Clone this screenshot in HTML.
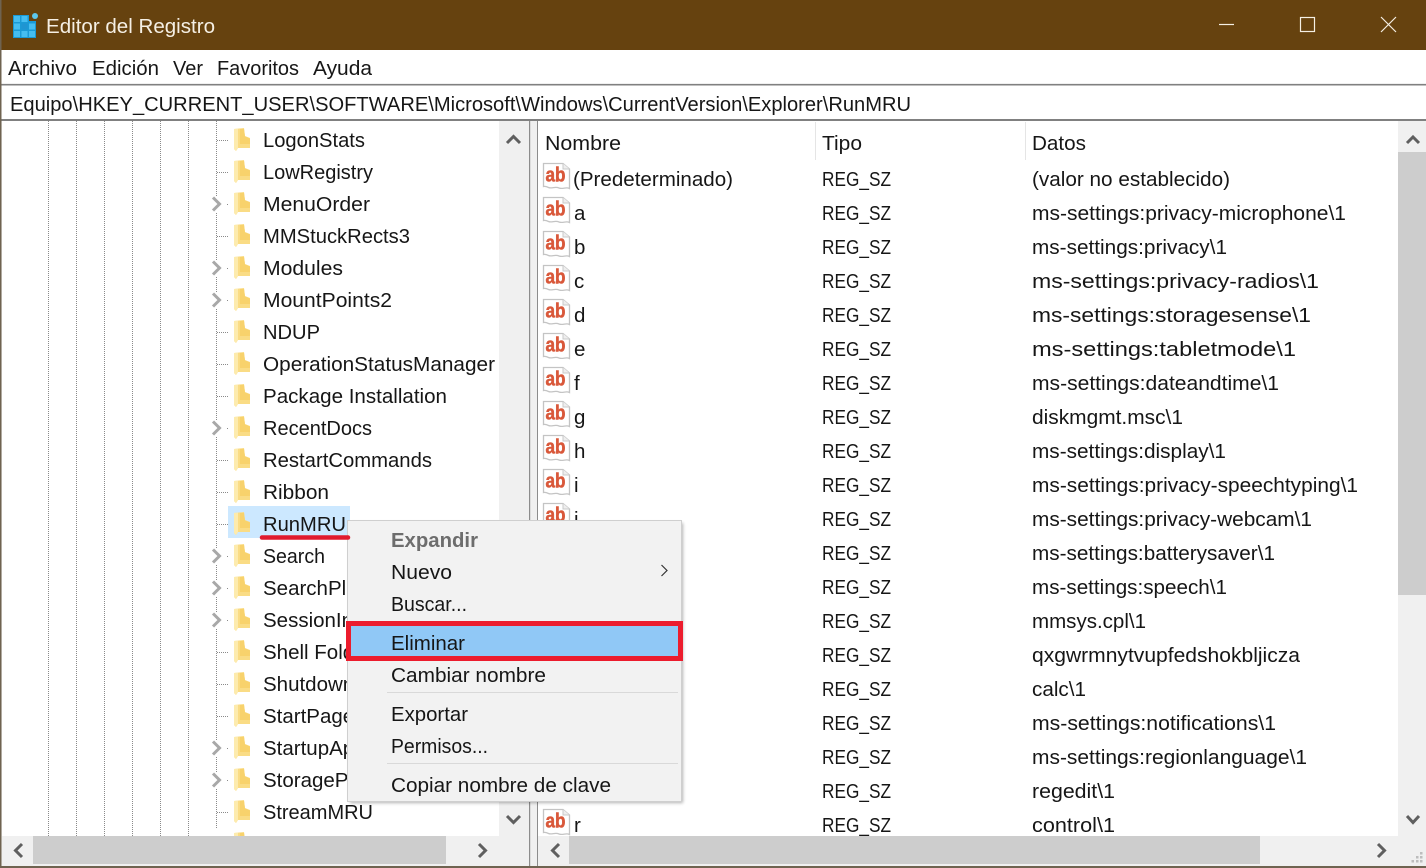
<!DOCTYPE html>
<html lang="es">
<head>
<meta charset="utf-8">
<title>Editor del Registro</title>
<style>
html,body{margin:0;padding:0;width:1426px;height:868px;overflow:hidden;background:#fff}
svg{display:block}
text{font-family:"Liberation Sans",sans-serif;font-size:20.5px;fill:#161616}
.dot{stroke:#8a8a8a;stroke-width:1;stroke-dasharray:1 1;fill:none}
.arr{fill:none;stroke:#a8a8a8;stroke-width:3}
.chev{fill:none;stroke:#5f5f5f;stroke-width:3}
</style>
</head>
<body>
<svg width="1426" height="868" viewBox="0 0 1426 868" xmlns="http://www.w3.org/2000/svg">
<defs>
<filter id="sh" x="-5%" y="-5%" width="110%" height="110%"><feGaussianBlur stdDeviation="1.5"/></filter>
<symbol id="f" width="20" height="24" viewBox="0 0 20 24" overflow="visible">
<path d="M2 1L12 0L13 8L18 10V20H6L4 23L2 21Z" fill="#fadc85"/>
<path d="M2 1L6 0.6V20L4 23L2 21Z" fill="#fdebae"/>
<path d="M8 1H12L13 8.5L18 10.5V16H8Z" fill="#f8d26c"/>
</symbol>
<symbol id="ab" width="29" height="30" viewBox="0 0 29 30" overflow="visible">
<path d="M1.5 2.5H21L27.5 8V27.5C24 25.5 21 28.5 17 27C13 25 10 28 6.5 26.5C4.5 25.5 3 25 1.5 25.5Z" fill="#fff" stroke="#c4c4c4" stroke-width="1.3"/>
<path d="M21 2.5V8H27.5" fill="#eee" stroke="#c9c9c9" stroke-width="1"/>
<text x="3.5" y="20.5" style="font-size:20px;font-weight:bold;fill:#d9583a;stroke:#d9583a;stroke-width:.5" textLength="20" lengthAdjust="spacingAndGlyphs">ab</text>
</symbol>
</defs>

<!-- Chrome -->
<rect width="1426" height="868" fill="#f0f0f0"/>
<rect x="0" y="0" width="1426" height="50" fill="#66420f"/>
<rect x="0" y="50" width="1426" height="33" fill="#fff"/>
<rect x="0" y="84" width="1426" height="1.5" fill="#808080"/>
<rect x="0" y="85.5" width="1426" height="33.5" fill="#fff"/>
<rect x="0" y="119" width="1426" height="2" fill="#808080"/>
<rect x="0" y="0" width="1.5" height="868" fill="#6f6350"/>
<rect x="0" y="866" width="1426" height="2" fill="#6f6350"/>

<!-- Title icon -->
<g>
<rect x="13" y="15" width="23" height="23" fill="#1a9ad6"/>
<rect x="29" y="15" width="8" height="6" fill="#66420f"/>
<g fill="#45bdf0">
<rect x="14" y="16" width="6" height="6"/><rect x="21.5" y="16" width="6" height="6"/>
<rect x="14" y="23.5" width="6" height="6"/><rect x="21.5" y="23.5" width="6" height="6" fill="#1f95d2"/><rect x="29" y="23.5" width="6" height="6"/>
<rect x="14" y="31" width="6" height="6"/><rect x="21.5" y="31" width="6" height="6"/><rect x="29" y="31" width="6" height="6"/>
</g>
<circle cx="35" cy="16" r="3" fill="#5cc7ee"/>
</g>
<text x="46" y="33" textLength="169" lengthAdjust="spacingAndGlyphs" style="fill:#f5efe4">Editor del Registro</text>

<!-- Window controls -->
<path d="M1219 24.5H1234" stroke="#f5efe4" stroke-width="1.2"/>
<rect x="1300.5" y="17.5" width="14" height="14" fill="none" stroke="#f5efe4" stroke-width="1.2"/>
<path d="M1381 17L1396 32M1396 17L1381 32" stroke="#f5efe4" stroke-width="1.2"/>

<!-- Menu bar -->
<text x="8" y="75" textLength="69" lengthAdjust="spacingAndGlyphs">Archivo</text>
<text x="92" y="75" textLength="67" lengthAdjust="spacingAndGlyphs">Edición</text>
<text x="173" y="75" textLength="30" lengthAdjust="spacingAndGlyphs">Ver</text>
<text x="217" y="75" textLength="82" lengthAdjust="spacingAndGlyphs">Favoritos</text>
<text x="313" y="75" textLength="59" lengthAdjust="spacingAndGlyphs">Ayuda</text>

<!-- Address -->
<text x="10" y="111" textLength="901" lengthAdjust="spacingAndGlyphs">Equipo\HKEY_CURRENT_USER\SOFTWARE\Microsoft\Windows\CurrentVersion\Explorer\RunMRU</text>

<!-- Tree pane -->
<rect x="2" y="121" width="497" height="715" fill="#fff"/>
<rect x="228" y="506" width="122" height="32" fill="#cce8ff"/>
<path class="dot" d="M48.5 121V836M76.5 121V836M104.5 121V836M132.5 121V836M160.5 121V836M188.5 121V836M216.5 121V829"/>
<path class="dot" d="M217 140.5H229M217 172.5H229M217 236.5H229M217 332.5H229M217 364.5H229M217 396.5H229M217 460.5H229M217 492.5H229M217 524.5H229M217 652.5H229M217 684.5H229M217 716.5H229M217 812.5H229M227 204.5H229M227 268.5H229M227 300.5H229M227 428.5H229M227 556.5H229M227 588.5H229M227 620.5H229M227 748.5H229M227 780.5H229"/>
<g>
<rect x="210" y="196" width="13" height="16" fill="#fff"/><rect x="210" y="260" width="13" height="16" fill="#fff"/><rect x="210" y="292" width="13" height="16" fill="#fff"/><rect x="210" y="420" width="13" height="16" fill="#fff"/><rect x="210" y="548" width="13" height="16" fill="#fff"/><rect x="210" y="580" width="13" height="16" fill="#fff"/><rect x="210" y="612" width="13" height="16" fill="#fff"/><rect x="210" y="740" width="13" height="16" fill="#fff"/><rect x="210" y="772" width="13" height="16" fill="#fff"/>
</g>
<path class="arr" d="M213 197.5L219.5 204L213 210.5M213 261.5L219.5 268L213 274.5M213 293.5L219.5 300L213 306.5M213 421.5L219.5 428L213 434.5M213 549.5L219.5 556L213 562.5M213 581.5L219.5 588L213 594.5M213 613.5L219.5 620L213 626.5M213 741.5L219.5 748L213 754.5M213 773.5L219.5 780L213 786.5"/>

<use href="#f" x="232" y="128"/><use href="#f" x="232" y="160"/><use href="#f" x="232" y="192"/><use href="#f" x="232" y="224"/><use href="#f" x="232" y="256"/><use href="#f" x="232" y="288"/><use href="#f" x="232" y="320"/><use href="#f" x="232" y="352"/><use href="#f" x="232" y="384"/><use href="#f" x="232" y="416"/><use href="#f" x="232" y="448"/><use href="#f" x="232" y="480"/><use href="#f" x="232" y="512"/><use href="#f" x="232" y="544"/><use href="#f" x="232" y="576"/><use href="#f" x="232" y="608"/><use href="#f" x="232" y="640"/><use href="#f" x="232" y="672"/><use href="#f" x="232" y="704"/><use href="#f" x="232" y="736"/><use href="#f" x="232" y="768"/><use href="#f" x="232" y="800"/><use href="#f" x="232" y="832"/>

<text x="263" y="147" textLength="102" lengthAdjust="spacingAndGlyphs">LogonStats</text>
<text x="263" y="179" textLength="110" lengthAdjust="spacingAndGlyphs">LowRegistry</text>
<text x="263" y="211" textLength="107" lengthAdjust="spacingAndGlyphs">MenuOrder</text>
<text x="263" y="243" textLength="147" lengthAdjust="spacingAndGlyphs">MMStuckRects3</text>
<text x="263" y="275" textLength="80" lengthAdjust="spacingAndGlyphs">Modules</text>
<text x="263" y="307" textLength="129" lengthAdjust="spacingAndGlyphs">MountPoints2</text>
<text x="263" y="339" textLength="57" lengthAdjust="spacingAndGlyphs">NDUP</text>
<text x="263" y="371" textLength="232" lengthAdjust="spacingAndGlyphs">OperationStatusManager</text>
<text x="263" y="403" textLength="184" lengthAdjust="spacingAndGlyphs">Package Installation</text>
<text x="263" y="435" textLength="109" lengthAdjust="spacingAndGlyphs">RecentDocs</text>
<text x="263" y="467" textLength="169" lengthAdjust="spacingAndGlyphs">RestartCommands</text>
<text x="263" y="499" textLength="66" lengthAdjust="spacingAndGlyphs">Ribbon</text>
<text x="263" y="531" textLength="83" lengthAdjust="spacingAndGlyphs">RunMRU</text>
<text x="263" y="563" textLength="62" lengthAdjust="spacingAndGlyphs">Search</text>
<text x="263" y="595">SearchPlatform</text>
<text x="263" y="627">SessionInfo</text>
<text x="263" y="659">Shell Folders</text>
<text x="263" y="691">Shutdown</text>
<text x="263" y="723">StartPage</text>
<text x="263" y="755">StartupApproved</text>
<text x="263" y="787">StoragePolicy</text>
<text x="263" y="819" textLength="110" lengthAdjust="spacingAndGlyphs">StreamMRU</text>

<!-- Tree scrollbars -->
<rect x="2" y="836" width="527" height="30" fill="#f0f0f0"/>
<rect x="33" y="836" width="413" height="28" fill="#cdcdcd"/>
<rect x="499" y="121" width="30" height="715" fill="#f0f0f0"/>
<path class="chev" d="M507 143L513.5 136.5L520 143"/>
<path class="chev" d="M507 816L513.5 822.5L520 816"/>
<path class="chev" d="M22 844L15.5 850.5L22 857"/>
<path class="chev" d="M479 844L485.5 850.5L479 857"/>

<!-- Splitter -->
<rect x="529" y="121" width="1.2" height="745" fill="#8c8c8c"/>
<rect x="537" y="121" width="1.2" height="745" fill="#8c8c8c"/>

<!-- List pane -->
<rect x="538" y="121" width="860" height="715" fill="#fff"/>
<path d="M815.5 122V160M1025.5 122V160" stroke="#e5e5e5" stroke-width="1"/>
<text x="545" y="150" textLength="76" lengthAdjust="spacingAndGlyphs">Nombre</text>
<text x="822" y="150" textLength="40" lengthAdjust="spacingAndGlyphs">Tipo</text>
<text x="1032" y="150" textLength="54" lengthAdjust="spacingAndGlyphs">Datos</text>

<use href="#ab" x="542" y="161"/><use href="#ab" x="542" y="195"/><use href="#ab" x="542" y="229"/><use href="#ab" x="542" y="263"/><use href="#ab" x="542" y="297"/><use href="#ab" x="542" y="331"/><use href="#ab" x="542" y="365"/><use href="#ab" x="542" y="399"/><use href="#ab" x="542" y="433"/><use href="#ab" x="542" y="467"/><use href="#ab" x="542" y="501"/><use href="#ab" x="542" y="773"/><use href="#ab" x="542" y="807"/>

<text x="573" y="186" textLength="160" lengthAdjust="spacingAndGlyphs">(Predeterminado)</text>
<text x="574" y="220">a</text><text x="574" y="254">b</text><text x="574" y="288">c</text><text x="574" y="322">d</text><text x="574" y="356">e</text><text x="574" y="390">f</text><text x="574" y="424">g</text><text x="574" y="458">h</text><text x="574" y="492">i</text><text x="574" y="526">j</text>
<text x="574" y="798">q</text><text x="574" y="832">r</text>

<g>
<text x="822" y="186" textLength="69" lengthAdjust="spacingAndGlyphs">REG_SZ</text>
<text x="822" y="220" textLength="69" lengthAdjust="spacingAndGlyphs">REG_SZ</text>
<text x="822" y="254" textLength="69" lengthAdjust="spacingAndGlyphs">REG_SZ</text>
<text x="822" y="288" textLength="69" lengthAdjust="spacingAndGlyphs">REG_SZ</text>
<text x="822" y="322" textLength="69" lengthAdjust="spacingAndGlyphs">REG_SZ</text>
<text x="822" y="356" textLength="69" lengthAdjust="spacingAndGlyphs">REG_SZ</text>
<text x="822" y="390" textLength="69" lengthAdjust="spacingAndGlyphs">REG_SZ</text>
<text x="822" y="424" textLength="69" lengthAdjust="spacingAndGlyphs">REG_SZ</text>
<text x="822" y="458" textLength="69" lengthAdjust="spacingAndGlyphs">REG_SZ</text>
<text x="822" y="492" textLength="69" lengthAdjust="spacingAndGlyphs">REG_SZ</text>
<text x="822" y="526" textLength="69" lengthAdjust="spacingAndGlyphs">REG_SZ</text>
<text x="822" y="560" textLength="69" lengthAdjust="spacingAndGlyphs">REG_SZ</text>
<text x="822" y="594" textLength="69" lengthAdjust="spacingAndGlyphs">REG_SZ</text>
<text x="822" y="628" textLength="69" lengthAdjust="spacingAndGlyphs">REG_SZ</text>
<text x="822" y="662" textLength="69" lengthAdjust="spacingAndGlyphs">REG_SZ</text>
<text x="822" y="696" textLength="69" lengthAdjust="spacingAndGlyphs">REG_SZ</text>
<text x="822" y="730" textLength="69" lengthAdjust="spacingAndGlyphs">REG_SZ</text>
<text x="822" y="764" textLength="69" lengthAdjust="spacingAndGlyphs">REG_SZ</text>
<text x="822" y="798" textLength="69" lengthAdjust="spacingAndGlyphs">REG_SZ</text>
<text x="822" y="832" textLength="69" lengthAdjust="spacingAndGlyphs">REG_SZ</text>
</g>
<g>
<text x="1032" y="186" textLength="198" lengthAdjust="spacingAndGlyphs">(valor no establecido)</text>
<text x="1032" y="220" textLength="314" lengthAdjust="spacingAndGlyphs">ms-settings:privacy-microphone\1</text>
<text x="1032" y="254" textLength="195" lengthAdjust="spacingAndGlyphs">ms-settings:privacy\1</text>
<text x="1032" y="288" textLength="287" lengthAdjust="spacingAndGlyphs">ms-settings:privacy-radios\1</text>
<text x="1032" y="322" textLength="279" lengthAdjust="spacingAndGlyphs">ms-settings:storagesense\1</text>
<text x="1032" y="356" textLength="264" lengthAdjust="spacingAndGlyphs">ms-settings:tabletmode\1</text>
<text x="1032" y="390" textLength="247" lengthAdjust="spacingAndGlyphs">ms-settings:dateandtime\1</text>
<text x="1032" y="424" textLength="151" lengthAdjust="spacingAndGlyphs">diskmgmt.msc\1</text>
<text x="1032" y="458" textLength="194" lengthAdjust="spacingAndGlyphs">ms-settings:display\1</text>
<text x="1032" y="492" textLength="326" lengthAdjust="spacingAndGlyphs">ms-settings:privacy-speechtyping\1</text>
<text x="1032" y="526" textLength="280" lengthAdjust="spacingAndGlyphs">ms-settings:privacy-webcam\1</text>
<text x="1032" y="560" textLength="243" lengthAdjust="spacingAndGlyphs">ms-settings:batterysaver\1</text>
<text x="1032" y="594" textLength="195" lengthAdjust="spacingAndGlyphs">ms-settings:speech\1</text>
<text x="1032" y="628" textLength="114" lengthAdjust="spacingAndGlyphs">mmsys.cpl\1</text>
<text x="1032" y="662" textLength="268" lengthAdjust="spacingAndGlyphs">qxgwrmnytvupfedshokbljicza</text>
<text x="1032" y="696" textLength="54" lengthAdjust="spacingAndGlyphs">calc\1</text>
<text x="1032" y="730" textLength="244" lengthAdjust="spacingAndGlyphs">ms-settings:notifications\1</text>
<text x="1032" y="764" textLength="275" lengthAdjust="spacingAndGlyphs">ms-settings:regionlanguage\1</text>
<text x="1032" y="798" textLength="83" lengthAdjust="spacingAndGlyphs">regedit\1</text>
<text x="1032" y="832" textLength="83" lengthAdjust="spacingAndGlyphs">control\1</text>
</g>

<!-- List scrollbars -->
<rect x="538" y="836" width="888" height="30" fill="#f0f0f0"/>
<rect x="569" y="836" width="691" height="28" fill="#cdcdcd"/>
<rect x="1398" y="121" width="28" height="745" fill="#f0f0f0"/>
<rect x="1398" y="152" width="28" height="443" fill="#cdcdcd"/>
<path class="chev" d="M1407 143L1413 137L1419 143"/>
<path class="chev" d="M1407 816L1413 822.5L1419 816"/>
<path class="chev" d="M559 844L552.5 850.5L559 857"/>
<path class="chev" d="M1378 844L1384.5 850.5L1378 857"/>
<g fill="#bdbdbd">
<rect x="1420" y="852" width="2.5" height="2.5"/><rect x="1416" y="856" width="2.5" height="2.5"/><rect x="1420" y="856" width="2.5" height="2.5"/><rect x="1411.5" y="860" width="2.5" height="2.5"/><rect x="1416" y="860" width="2.5" height="2.5"/><rect x="1420" y="860" width="2.5" height="2.5"/>
</g>

<!-- Context menu -->
<rect x="350" y="523" width="333" height="280" fill="#000" opacity=".3" filter="url(#sh)"/>
<rect x="347.5" y="520.5" width="334" height="281" fill="#f2f2f2" stroke="#cfcfcf" stroke-width="1"/>
<rect x="349" y="624" width="331" height="35" fill="#90c8f6"/>
<path d="M387 692.5H678M387 763.5H678" stroke="#d9d9d9" stroke-width="1"/>
<text x="391" y="547" textLength="87" lengthAdjust="spacingAndGlyphs" style="font-weight:bold;fill:#6d6d6d">Expandir</text>
<text x="391" y="579" textLength="61" lengthAdjust="spacingAndGlyphs">Nuevo</text>
<path d="M661.5 565L667 570.5L661.5 576" fill="none" stroke="#333" stroke-width="1.2"/>
<text x="391" y="611" textLength="76" lengthAdjust="spacingAndGlyphs">Buscar...</text>
<text x="391" y="650" textLength="74" lengthAdjust="spacingAndGlyphs">Eliminar</text>
<text x="391" y="682" textLength="155" lengthAdjust="spacingAndGlyphs">Cambiar nombre</text>
<text x="391" y="721" textLength="77" lengthAdjust="spacingAndGlyphs">Exportar</text>
<text x="391" y="753" textLength="97" lengthAdjust="spacingAndGlyphs">Permisos...</text>
<text x="391" y="792" textLength="220" lengthAdjust="spacingAndGlyphs">Copiar nombre de clave</text>

<!-- Red highlights -->
<rect x="348.5" y="623.5" width="332" height="35" fill="none" stroke="#ec1c2d" stroke-width="5"/>
<path d="M262 537.5H348" stroke="#e01a2e" stroke-width="4.5" stroke-linecap="round"/>
</svg>
</body>
</html>
